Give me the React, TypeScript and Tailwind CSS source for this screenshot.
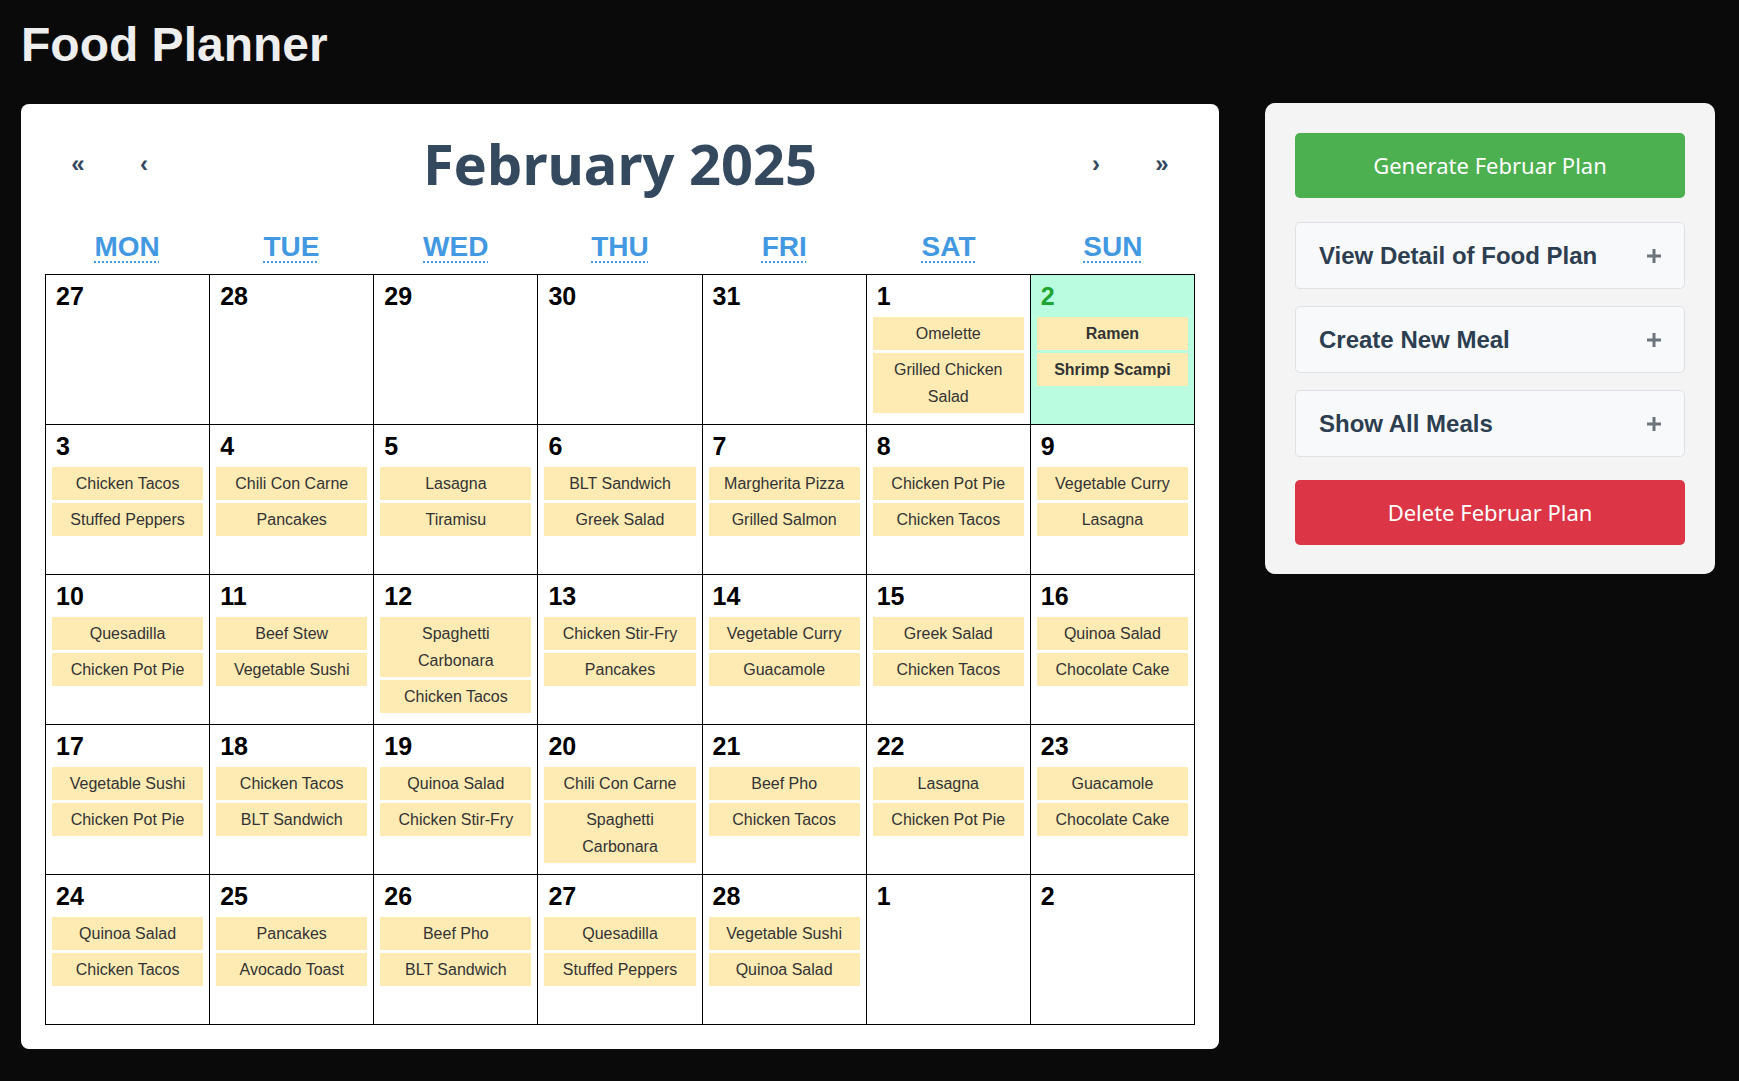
type Day = {
    num: number
    meals: string[]
    today?: boolean
}

const rows: Day[][] = [
    [
        { num: 27, meals: [] },
        { num: 28, meals: [] },
        { num: 29, meals: [] },
        { num: 30, meals: [] },
        { num: 31, meals: [] },
        { num: 1, meals: ["Omelette", "Grilled Chicken Salad"] },
        { num: 2, meals: ["Ramen", "Shrimp Scampi"], today: true },
    ],
    [
        { num: 3, meals: ["Chicken Tacos", "Stuffed Peppers"] },
        { num: 4, meals: ["Chili Con Carne", "Pancakes"] },
        { num: 5, meals: ["Lasagna", "Tiramisu"] },
        { num: 6, meals: ["BLT Sandwich", "Greek Salad"] },
        { num: 7, meals: ["Margherita Pizza", "Grilled Salmon"] },
        { num: 8, meals: ["Chicken Pot Pie", "Chicken Tacos"] },
        { num: 9, meals: ["Vegetable Curry", "Lasagna"] },
    ],
    [
        { num: 10, meals: ["Quesadilla", "Chicken Pot Pie"] },
        { num: 11, meals: ["Beef Stew", "Vegetable Sushi"] },
        { num: 12, meals: ["Spaghetti Carbonara", "Chicken Tacos"] },
        { num: 13, meals: ["Chicken Stir-Fry", "Pancakes"] },
        { num: 14, meals: ["Vegetable Curry", "Guacamole"] },
        { num: 15, meals: ["Greek Salad", "Chicken Tacos"] },
        { num: 16, meals: ["Quinoa Salad", "Chocolate Cake"] },
    ],
    [
        { num: 17, meals: ["Vegetable Sushi", "Chicken Pot Pie"] },
        { num: 18, meals: ["Chicken Tacos", "BLT Sandwich"] },
        { num: 19, meals: ["Quinoa Salad", "Chicken Stir-Fry"] },
        { num: 20, meals: ["Chili Con Carne", "Spaghetti Carbonara"] },
        { num: 21, meals: ["Beef Pho", "Chicken Tacos"] },
        { num: 22, meals: ["Lasagna", "Chicken Pot Pie"] },
        { num: 23, meals: ["Guacamole", "Chocolate Cake"] },
    ],
    [
        { num: 24, meals: ["Quinoa Salad", "Chicken Tacos"] },
        { num: 25, meals: ["Pancakes", "Avocado Toast"] },
        { num: 26, meals: ["Beef Pho", "BLT Sandwich"] },
        { num: 27, meals: ["Quesadilla", "Stuffed Peppers"] },
        { num: 28, meals: ["Vegetable Sushi", "Quinoa Salad"] },
        { num: 1, meals: [] },
        { num: 2, meals: [] },
    ],
]

const weekdays = [
    ["MON", "Monday"],
    ["TUE", "Tuesday"],
    ["WED", "Wednesday"],
    ["THU", "Thursday"],
    ["FRI", "Friday"],
    ["SAT", "Saturday"],
    ["SUN", "Sunday"],
]

const PlusIcon = () => (
    <svg width="14" height="14" viewBox="0 0 14 14" className="shrink-0">
        <rect x="5.5" y="0" width="3" height="14" fill="#6c757d" />
        <rect x="0" y="5.5" width="14" height="3" fill="#6c757d" />
    </svg>
)

const Accordion = ({ title, className }: { title: string; className: string }) => (
    <div className={`flex h-[67px] items-center justify-between rounded-[5px] border border-[#dee2e6] bg-[#f8f9fa] px-[23px] ${className}`}>
        <span className="text-[24px] font-bold text-[#2c3e50]">{title}</span>
        <PlusIcon />
    </div>
)

const DayCell = ({ day }: { day: Day }) => (
    <div className={`h-[150px] border-r border-b border-black px-[6px] pt-[7px] ${day.today ? "bg-[#b9fcdf]" : "bg-white"}`}>
        <div className={`mb-[6px] pl-[4px] text-[25px] font-bold leading-[29px] ${day.today ? "text-[#1fa534]" : "text-black"}`}>
            {day.num}
        </div>
        <div className="flex flex-col gap-[3px]">
            {day.meals.map((meal) => (
                <div
                    key={meal}
                    className={`bg-[#fdebb3] px-[4px] py-[3px] text-center text-[16px] leading-[27px] text-[#333333] ${day.today ? "font-bold" : ""}`}
                >
                    {meal}
                </div>
            ))}
        </div>
    </div>
)

const App = () => {
    return (
        <div className="min-h-screen bg-[#0a0a0a] px-[21px] pt-[17px] font-['Liberation_Sans',Arial,sans-serif]">
            <h1 className="text-[48px] font-bold leading-[55px] text-[#eeeeee]">Food Planner</h1>

            <div className="mt-[32px] flex items-start gap-[46px]">
                {/* CALENDAR */}
                <div className="w-[1198px] rounded-lg bg-white pt-[28px] pr-[24px] pb-[24px] pl-[24px]">
                    <div className="flex h-[63px] items-center">
                        <button className="w-[66px] text-[24px] font-bold leading-[28px] text-[#34495e]">«</button>
                        <button className="w-[66px] text-[24px] font-bold leading-[28px] text-[#34495e]">‹</button>
                        <h2 className="flex-1 text-center font-['Noto_Sans',sans-serif] text-[56px] font-bold leading-[63px] text-[#34495e]">
                            February 2025
                        </h2>
                        <button className="w-[66px] text-[24px] font-bold leading-[28px] text-[#34495e]">›</button>
                        <button className="w-[66px] text-[24px] font-bold leading-[28px] text-[#34495e]">»</button>
                    </div>

                    <div className="mt-[36px] grid h-[32px] w-[1150px] grid-cols-7">
                        {weekdays.map(([short, long]) => (
                            <div key={short} className="text-center">
                                <abbr
                                    title={long}
                                    className="text-[28px] font-bold leading-[32px] text-[#4299e1] underline decoration-dotted decoration-2 underline-offset-[5px]"
                                >
                                    {short}
                                </abbr>
                            </div>
                        ))}
                    </div>

                    <div className="mt-[11px] grid w-[1150px] grid-cols-7 border-t border-l border-black">
                        {rows.flat().map((day, i) => (
                            <DayCell key={i} day={day} />
                        ))}
                    </div>
                </div>

                {/* SIDE PANEL */}
                <div className="-mt-px w-[450px] rounded-[10px] bg-[#f4f4f4] px-[30px] pt-[30px] pb-[29px]">
                    <button className="flex h-[65px] w-full items-center justify-center rounded-[5px] bg-[#4caf50] font-['Noto_Sans',sans-serif] text-[22px] text-white">
                        Generate Februar Plan
                    </button>
                    <Accordion title="View Detail of Food Plan" className="mt-[24px]" />
                    <Accordion title="Create New Meal" className="mt-[17px]" />
                    <Accordion title="Show All Meals" className="mt-[17px]" />
                    <button className="mt-[23px] flex h-[65px] w-full items-center justify-center rounded-[5px] bg-[#dc3545] font-['Noto_Sans',sans-serif] text-[22px] text-white">
                        Delete Februar Plan
                    </button>
                </div>
            </div>
        </div>
    )
}

export default App
